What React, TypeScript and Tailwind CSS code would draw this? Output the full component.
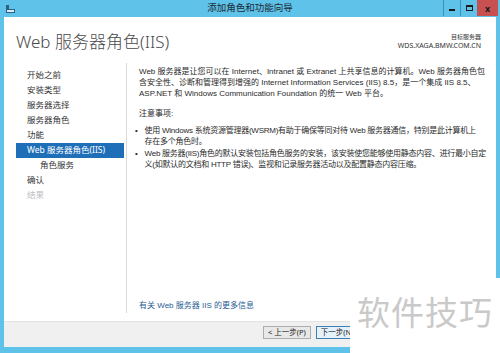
import React from "react";

const navItems = [
  { label: "开始之前" },
  { label: "安装类型" },
  { label: "服务器选择" },
  { label: "服务器角色" },
  { label: "功能" },
  { label: "Web 服务器角色(IIS)", active: true },
  { label: "角色服务", sub: true },
  { label: "确认" },
  { label: "结果", disabled: true },
];

export default function App() {
  return (
    <div
      className="relative w-[500px] h-[353px] bg-[#5fc2e8] flex flex-col overflow-hidden text-[#222]"
      style={{ fontFamily: '"Noto Sans", "Noto Sans CJK SC", sans-serif' }}
    >
      {/* title bar */}
      <div className="relative h-[17px] flex items-center shrink-0">
        <div className="ml-[6px] w-[9px] h-[9px] flex flex-col justify-end">
          <div className="w-[3px] h-[4px] bg-[#2b5f86]" />
          <div className="w-[9px] h-[4px] border border-[#2b5f86] bg-[#dcecf4]" />
        </div>
        <div className="absolute inset-0 flex items-center justify-center text-[9.5px] text-[#1b2b36]">
          添加角色和功能向导
        </div>
        <div className="ml-auto flex h-[16px] self-start mr-[2px]">
          <div className="w-[17px] flex items-center justify-center border-l border-[#3a8fb3]">
            <div className="w-[6px] h-[2px] bg-[#1a1a1a] mt-[4px]" />
          </div>
          <div className="w-[17px] flex items-center justify-center border-l border-[#3a8fb3]">
            <div className="w-[7px] h-[6px] border-[1.5px] border-t-[2px] border-[#1a1a1a]" />
          </div>
          <div className="w-[21px] bg-[#c75050] flex items-center justify-center text-[9px] font-bold text-[#1a1a1a] leading-none">
            x
          </div>
        </div>
      </div>

      {/* window body */}
      <div className="flex-1 mx-[4px] flex flex-col">
        <div className="flex-1 bg-white flex flex-col">
          {/* header */}
          <div className="h-[48px] flex items-start justify-between pl-[12px] pr-[15px]">
            <div className="mt-[14px] text-[17px] leading-[22px] text-[#4a4a4a] font-light">
              Web 服务器角色(IIS)
            </div>
            <div className="mt-[16px] text-right leading-[8px]">
              <div className="text-[6px] text-[#333]">目标服务器</div>
              <div className="text-[7px] text-[#333] mt-[1px]">WDS.XAGA.BMW.COM.CN</div>
            </div>
          </div>

          {/* main */}
          <div className="flex-1 flex">
            <div className="w-[122px] shrink-0 pt-[3px] pl-[12px] pr-[2px]">
              {navItems.map((item) => (
                <div
                  key={item.label}
                  className={
                    "h-[15px] flex items-center text-[8.5px] whitespace-nowrap " +
                    (item.active
                      ? "bg-[#1f6fb8] text-white pl-[11px]"
                      : item.sub
                      ? "pl-[24px] text-[#333]"
                      : item.disabled
                      ? "pl-[11px] text-[#c0c0c0]"
                      : "pl-[11px] text-[#333]")
                  }
                >
                  {item.label}
                </div>
              ))}
            </div>
            <div className="w-px bg-[#d9d9d9] mt-[-2px] mb-[8px]" />
            <div
              className="flex-1 pl-[12px] pr-[10px] flex flex-col text-[8px] leading-[11px] text-[#2a2a2a]"
              style={{ fontFamily: '"Liberation Sans", "Noto Sans CJK SC", sans-serif' }}
            >
              <p className="mt-[1px]">
                Web 服务器是让您可以在 Internet、Intranet 或 Extranet 上共享信息的计算机。Web 服务器角色包含安全性、诊断和管理得到增强的 Internet Information Services (IIS) 8.5，是一个集成 IIS 8.5、ASP.NET 和 Windows Communication Foundation 的统一 Web 平台。
              </p>
              <p className="mt-[9px]">注意事项:</p>
              <div className="mt-[6px] flex gap-[7px] ml-[-4px] mr-[10px] tracking-[-0.25px]">
                <span>•</span>
                <p>使用 Windows 系统资源管理器(WSRM)有助于确保等同对待 Web 服务器通信，特别是此计算机上存在多个角色时。</p>
              </div>
              <div className="mt-[1px] flex gap-[7px] ml-[-4px] mr-[-5px] tracking-[-0.25px]">
                <span>•</span>
                <p>Web 服务器(IIS)角色的默认安装包括角色服务的安装，该安装使您能够使用静态内容、进行最小自定义(如默认的文档和 HTTP 错误)、监视和记录服务器活动以及配置静态内容压缩。</p>
              </div>
              <div className="mt-auto mb-[10px] text-[#1f5d94]">有关 Web 服务器 IIS 的更多信息</div>
            </div>
          </div>
        </div>

        {/* footer */}
        <div className="h-[26px] bg-[#f0f0f0] border-t border-[#e3e3e3] flex items-start pl-[259px] pt-[4px] gap-[5px]">
          <div className="h-[13px] px-[4px] border border-[#adadad] bg-[#e8e8e8] text-[7.5px] leading-[11px] text-[#222] whitespace-nowrap">
            &lt; 上一步(P)
          </div>
          <div className="h-[13px] px-[4px] border border-[#3c7fb1] bg-[#e5f1fb] text-[7.5px] leading-[11px] text-[#222] whitespace-nowrap">
            下一步(N) &gt;
          </div>
        </div>
      </div>
      <div className="h-[6px] shrink-0" />

      {/* watermark */}
      <div className="absolute left-[350px] top-[278px] w-[150px] h-[75px] bg-white flex items-center justify-center">
        <span className="text-[33px] text-[#c9c9c9] tracking-[1px] mt-[-6px]">软件技巧</span>
      </div>
    </div>
  );
}
